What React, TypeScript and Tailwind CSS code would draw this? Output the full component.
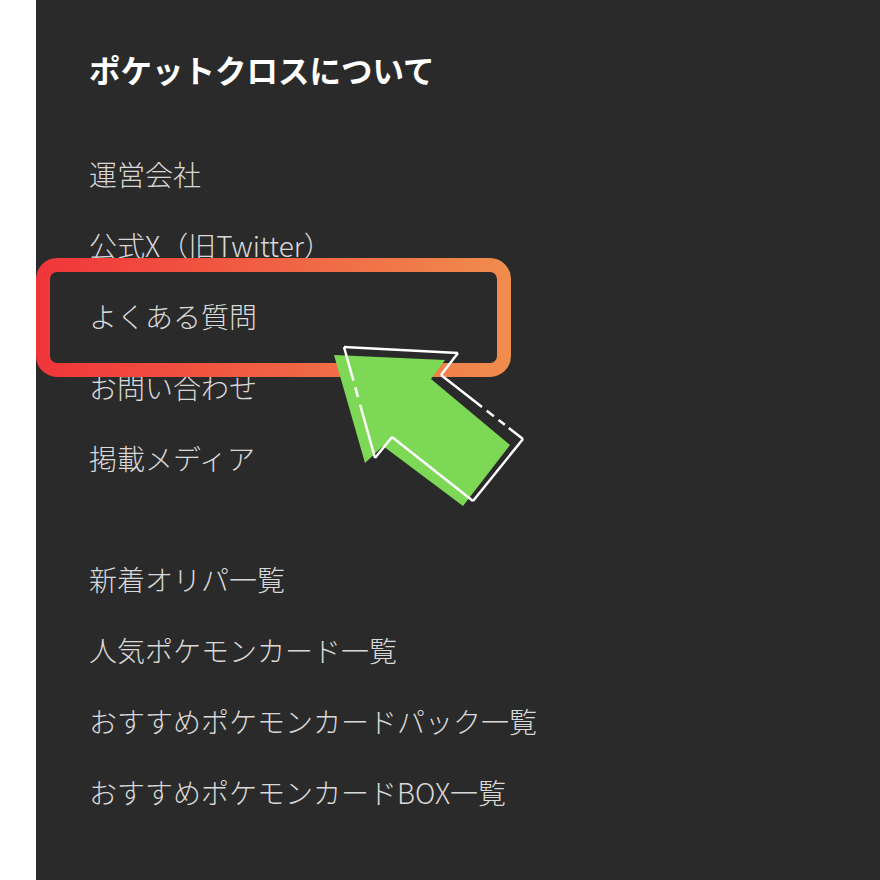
import React from "react";

const group1 = ["運営会社", "公式X（旧Twitter）", "よくある質問", "お問い合わせ", "掲載メディア"];
const group2 = ["新着オリパ一覧", "人気ポケモンカード一覧", "おすすめポケモンカードパック一覧", "おすすめポケモンカードBOX一覧"];

const font = { fontFamily: '"Noto Sans CJK JP", "Noto Sans", sans-serif' };

function Item({ label }: { label: string }) {
  return (
    <div className="h-[71px] flex items-center text-[28px] font-light text-[#d9d9d9] leading-none">
      {label}
    </div>
  );
}

export default function App() {
  return (
    <div className="relative w-[880px] h-[880px] flex bg-white overflow-hidden" style={font}>
      <div className="w-[36px] shrink-0 bg-white" />
      <div className="flex-1 bg-[#2a2a2a] pl-[53px] pt-[50px]">
        <div className="h-[40px] flex items-center text-[31.5px] font-bold text-white leading-none">
          ポケットクロスについて
        </div>
        <div className="mt-[48px] flex flex-col">
          {group1.map((l) => (
            <Item key={l} label={l} />
          ))}
        </div>
        <div className="mt-[50px] flex flex-col">
          {group2.map((l) => (
            <Item key={l} label={l} />
          ))}
        </div>
      </div>

      <svg
        className="absolute left-0 top-0 pointer-events-none"
        width="880"
        height="880"
        viewBox="0 0 880 880"
      >
        <defs>
          <linearGradient id="og" x1="36" y1="0" x2="511" y2="0" gradientUnits="userSpaceOnUse">
            <stop offset="0" stopColor="#f0353a" />
            <stop offset="1" stopColor="#f08d4d" />
          </linearGradient>
        </defs>
        <rect x="43" y="265" width="461" height="105" rx="14" ry="14" fill="none" stroke="url(#og)" strokeWidth="14" />

        <polygon
          points="334,355 445,360 431,379 510,445 463,506 383,446 365,463"
          fill="#7dd856"
        />
        <g stroke="#ffffff" strokeWidth="2.5" fill="none" strokeLinecap="butt" strokeLinejoin="miter">
          <line x1="458" y1="353" x2="344" y2="347" />
          <line x1="344" y1="347" x2="375" y2="458" strokeDasharray="35 7 10 8 200" />
          <line x1="375" y1="458" x2="392" y2="437" />
          <line x1="392" y1="437" x2="473" y2="501" />
          <line x1="473" y1="501" x2="523" y2="439" />
          <line x1="441" y1="375" x2="523" y2="439" strokeDasharray="52 6 9 6 8 5 200" />
          <line x1="441" y1="375" x2="458" y2="353" />
        </g>
      </svg>
    </div>
  );
}
